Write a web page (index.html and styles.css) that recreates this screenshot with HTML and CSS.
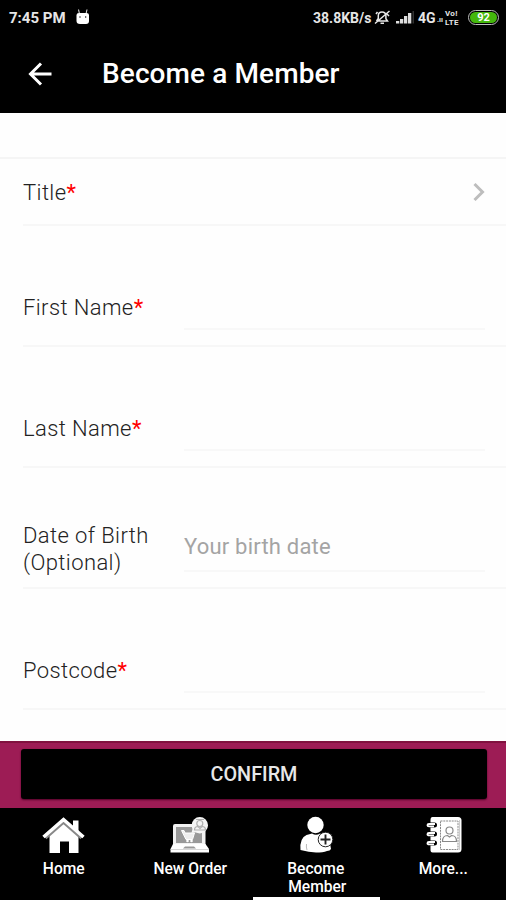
FILE: index.html
```html
<!DOCTYPE html>
<html lang="en">
<head>
<meta charset="utf-8">
<title>Become a Member</title>
<link rel="stylesheet" href="styles.css">
</head>
<body>
<div class="app">
  <div class="status">
    <span class="clock">7:45 PM</span>
    <svg class="droid" width="14" height="17" viewBox="0 0 14 17"><path d="M2.500 1.500 3.500 6M11 1.500 10 6" stroke="#ddd" stroke-width="1.100"/><path d="M.5 7Q.5 5 3 5h7.500Q13 5 13 7v6q0 3-3 3H4q-3.500 0-3.500-3z" fill="#fff"/><circle cx="4" cy="9" r=".7"/><circle cx="9.700" cy="9" r=".7"/></svg>
    <span class="speed">38.8KB/s</span>
    <svg class="mute" width="17" height="17" viewBox="0 0 17 17" fill="none" stroke="#e8e8e8" stroke-width="1.500"><path d="M3 12h10.500l-1.600-2.300V6.500Q11.500 3 8 3T4.300 6.500v3L2.500 12M6.500 14.300h3.500M1 14.500 15.500 2M2 5l1.500-2M13 5l2 2"/></svg>
    <svg class="signal" width="18" height="13" viewBox="0 0 18 13"><path d="M0 10h3.300v2.500H0zM4 8h3.300v4.500H4zM8 5h3.300v7.500H8zM12 2h3.300v10.500H12z" fill="#ddd"/><path d="M16.500 0H18v12.500h-1.500z" fill="#333"/></svg>
    <span class="net">4G</span><span class="arrows">.ıı</span>
    <span class="volte"><span>Vo!</span><span>LTE</span></span>
    <span class="battery"><span>92</span></span>
  </div>
  <header class="bar">
    <svg width="24" height="24" viewBox="0 0 24 24" fill="none" stroke="#fff" stroke-width="3"><path d="M23.500 12H2.500M13 1.500 2.500 12 13 22.500"/></svg>
    <h1>Become a Member</h1>
  </header>
  <main class="form">
    <div class="row select"><span class="label">Title<b>*</b></span>
      <svg width="12" height="20" viewBox="0 0 12 20" fill="none" stroke="#bdbdbd" stroke-width="3"><path d="M1.500 2 9.500 10l-8 8"/></svg></div>
    <div class="row"><span class="label">First Name<b>*</b></span><div class="field"></div></div>
    <div class="row"><span class="label">Last Name<b>*</b></span><div class="field"></div></div>
    <div class="row"><span class="label">Date of Birth (Optional)</span><div class="field">Your birth date</div></div>
    <div class="row"><span class="label">Postcode<b>*</b></span><div class="field"></div></div>
  </main>
  <div class="action"><button class="confirm">CONFIRM</button></div>
  <nav class="tabs">
    <a class="tab">
      <svg width="44" height="38" viewBox="0 0 44 38"><path d="M31 4.500h5.500v13H31z" fill="#fff"/><path d="M21.500 6.500 36.500 19v18H27V25.500h-9V37H7.500V19z" fill="#fff"/><path d="M3 21.500 21.500 5.300 40 21.500" fill="none" stroke="#888" stroke-width="4.500"/><path d="M1.500 21 21.500 3.500 41.500 21" fill="none" stroke="#fff" stroke-width="3.500"/></svg>
      <span>Home</span></a>
    <a class="tab">
      <svg width="44" height="38" viewBox="0 0 44 38"><rect x="5" y="8" width="32.500" height="23" rx="2" fill="#f2f2f2"/><path d="M8 11h26v16H8z" fill="#999"/><path d="M5 28h32.500l3.500 5v3.500H2.500V33z" fill="#fff"/><path d="M2.500 33.500H41" stroke="#ccc" stroke-width=".8"/><path d="M17 30.500h9l2 2H15z" fill="#999"/><path d="M13.500 14.500h2.500l1 2.500h9.500l-2 6.500H18z" fill="#eee" stroke="#fff"/><circle cx="19.500" cy="25" r="1.300" fill="#fff"/><circle cx="23.500" cy="25" r="1.300" fill="#fff"/><path d="m25 11-1.500 6 6.500-1z" fill="#f5f5f5"/><circle cx="31.800" cy="9.200" r="8.200" fill="#f5f5f5"/><g fill="none" stroke="#b0b0b0" stroke-width="1.200"><circle cx="31.800" cy="7.500" r="3"/><path d="M26.500 14q0-3.500 3.500-3.500l2 2 2-2q3.500 0 3.500 3.500zM28 3.500h8"/></g></svg>
      <span>New Order</span></a>
    <a class="tab active">
      <svg width="44" height="38" viewBox="0 0 44 38"><circle cx="21.500" cy="9" r="8.200" fill="#fff"/><path d="M6.500 34q-1-12 6-15 3-1 5.500-1.500Q22 20 26 17.500l9 4.500 2 11q-1 2-4 2-4 1.500-11 1.500-7-.5-15.500-2.500z" fill="#fff"/><path d="M12.500 28q-.5 3 .5 6" stroke="#bbb" fill="none"/><circle cx="31.500" cy="23.500" r="7.300" fill="#fff" stroke="#222" stroke-width="1"/><path d="M31.500 18.500v10M26.500 23.500h10" stroke="#222" stroke-width="1.900"/></svg>
      <span>Become</span><span class="second">Member</span></a>
    <a class="tab">
      <svg width="44" height="38" viewBox="0 0 44 38"><path d="M11.500 1H37q3.500 0 3.500 3.500V33q0 3.500-3.500 3.500H11.500q-2 0-2-2V4q0-3 2-3z" fill="#fff"/><path d="M38.500 4v30" stroke="#ccc"/><path d="M19.500 5H37v28.500H19.500z" fill="none" stroke="#888" stroke-dasharray="2 .8"/><g fill="none" stroke="#888" stroke-width="1.200"><circle cx="28.500" cy="14.500" r="3.500"/><path d="M21.500 25.500q0-6 5-6l2 1.500 2-1.500q5 0 5 6z"/></g><path d="M6 6.500h7.500Q16 6.500 16 9t-2.500 2.500H6zM6 15.500h7.500Q16 15.500 16 18t-2.500 2.500H6zM6 24.500h7.500Q16 24.500 16 27t-2.500 2.500H6z"/><path d="M14 8H8q-1.500 0-1.500 1.200T8 10.400h5M14 17H8q-1.500 0-1.500 1.200T8 19.400h5M14 26H8q-1.500 0-1.500 1.200T8 28.400h5" fill="none" stroke="#fff" stroke-width="1.900"/></svg>
      <span>More...</span></a>
  </nav>
</div>
</body>
</html>
```
FILE: styles.css
```css
* { box-sizing: border-box; }
body { margin: 0; font-family: Roboto, "Liberation Sans", sans-serif; background: #fefefe; }
svg { display: block; flex: none; }
.app { width: 506px; height: 900px; display: flex; flex-direction: column; overflow: hidden; }
.status { height: 35px; background: #000; color: #e6e6e6; display: flex; align-items: center; padding: 0 7px 0 9px; font-weight: 700; white-space: nowrap; }
.clock { width: 67px; font-size: 15px; }
.droid { margin-bottom: 2px; }
.speed { width: 61px; margin-left: 223px; font-size: 14px; }
.signal { margin-left: 5px; }
.net { margin-left: 4px; width: 19px; font-size: 14px; }
.arrows { width: 8px; font-size: 7px; padding-top: 5px; }
.volte { width: 17px; display: flex; flex-direction: column; font-size: 8px; line-height: 9px; letter-spacing: .3px; }
.battery { margin-left: 6px; width: 31px; height: 15px; flex: none; border: 1.500px solid #bbb; border-radius: 8px; background: #000; padding: 1px; display: flex; }
.battery span { flex: 1; border-radius: 6px; background: #44b70c; color: #fff; font-size: 11px; line-height: 11px; text-align: center; }
.bar { height: 78px; background: #000; display: flex; align-items: center; padding: 0 0 0 28px; gap: 50px; color: #fff; }
.bar h1 { margin: 0; font-size: 28px; font-weight: 500; line-height: 32px; letter-spacing: .1px; white-space: nowrap; }
.form { height: 628px; padding-top: 44px; }
.row { height: 121px; margin-left: 23px; border-bottom: 2px solid #f7f7f7; display: flex; align-items: center; padding: 42px 21px 0 0; }
.row.select { height: 69px; margin-left: 0; padding: 0 21px 2px 23px; border-top: 2px solid #f5f5f5; justify-content: space-between; border-bottom: 0; background: linear-gradient(#f7f7f7, #f7f7f7) 23px 100% / 100% 2px no-repeat; }
.label { width: 161px; padding-top: 1px; color: #222; font-size: 22px; font-weight: 300; line-height: 27px; letter-spacing: .4px; }
.label b { color: #f00; font-weight: 400; }
.field { width: 301px; height: 47px; line-height: 43px; border-bottom: 2px solid #f8f8f8; color: #a4a4a4; font-size: 22px; letter-spacing: .2px; }
.action { height: 67px; background: #9d1c55; border-top: 2px solid #80123f; padding: 6px 19px 9px 21px; }
.confirm { display: block; width: 466px; height: 50px; border: 0; border-radius: 3px; background: #000; color: #e8e8e8; font: 500 19.800px Roboto, sans-serif; box-shadow: 0 1px 2px #500027; }
.tabs { height: 92px; background: #000; display: grid; grid-template-columns: repeat(4, 1fr); }
.tab { display: flex; flex-direction: column; align-items: center; padding: 8px 0 0 1px; color: #fff; font-size: 15.600px; line-height: 18px; font-weight: 500; }
.tab svg { margin-bottom: 6px; }
.tab.active { border-bottom: 3px solid #fff; padding: 8px 1px 0 0; }
.second { padding-left: 3px; }
```
